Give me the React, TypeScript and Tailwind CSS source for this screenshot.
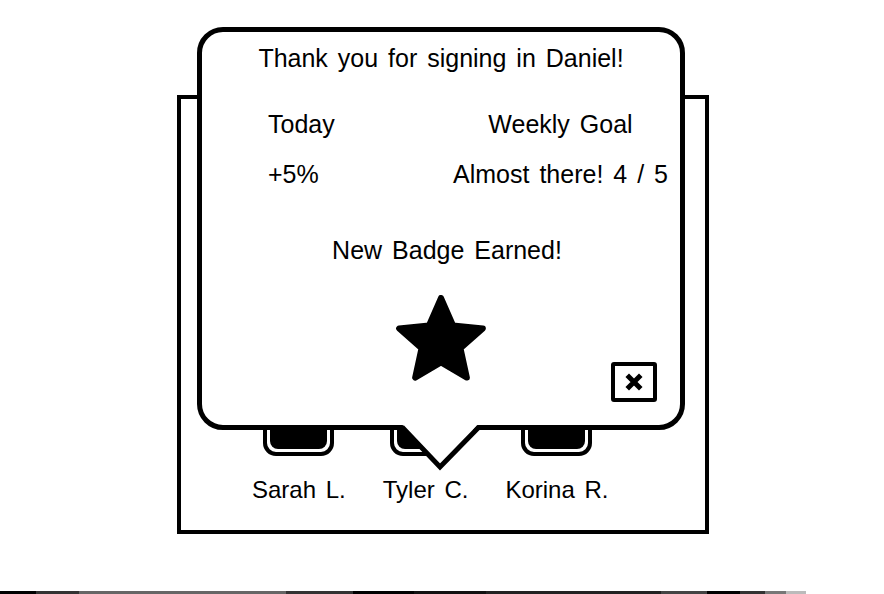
import type { ReactNode } from 'react'

const font = { fontFamily: '"Liberation Sans", Arial, sans-serif' }

function Avatar({ name }: { name: string }) {
  return (
    <div className="flex flex-col items-center">
      <div className="w-[71px] h-[71px] border-[4px] border-black rounded-[13px] p-[3px] bg-white">
        <div className="w-full h-full bg-black rounded-[8px]" />
      </div>
      <span className="mt-[19px] text-[24px] leading-[30px] text-black [word-spacing:3px] whitespace-nowrap">
        {name}
      </span>
    </div>
  )
}

function Line({ children, className = '' }: { children: ReactNode; className?: string }) {
  return (
    <div className={`text-[25px] leading-[30px] text-black [word-spacing:3px] whitespace-nowrap ${className}`}>
      {children}
    </div>
  )
}

function Star() {
  return (
    <svg width="94" height="88" viewBox="0 0 94 88">
      <polygon
        points="47,3 59.05,30.42 88.85,33.4 66.5,53.33 72.86,82.6 47,67.5 21.14,82.6 27.5,53.33 5.15,33.4 34.95,30.42"
        fill="black"
        stroke="black"
        strokeWidth="6"
        strokeLinejoin="round"
      />
    </svg>
  )
}

export default function App() {
  const people = ['Sarah L.', 'Tyler C.', 'Korina R.']

  return (
    <div className="relative w-[884px] h-[594px] bg-white overflow-hidden" style={font}>
      {/* background card with the team */}
      <div className="ml-[177px] mt-[95px] w-[532px] h-[439px] border-[4px] border-black bg-white flex flex-col justify-end pb-[25px] pl-[71px]">
        <div className="flex gap-[37px] items-end">
          {people.map((p) => (
            <Avatar key={p} name={p} />
          ))}
        </div>
      </div>

      {/* bottom rule */}
      <div className="mt-[57px] flex h-[3px] w-[806px]">
        <div className="w-[36px] bg-black" />
        <div className="w-[43px] bg-[#333]" />
        <div className="w-[207px] bg-[#666]" />
        <div className="w-[67px] bg-[#333]" />
        <div className="w-[61px] bg-black" />
        <div className="w-[72px] bg-[#111]" />
        <div className="w-[175px] bg-[#222]" />
        <div className="w-[46px] bg-[#444]" />
        <div className="w-[33px] bg-black" />
        <div className="w-[25px] bg-[#333]" />
        <div className="w-[21px] bg-[#777]" />
        <div className="w-[20px] bg-[#bbb]" />
      </div>

      {/* speech bubble popup */}
      <div className="absolute left-[197px] top-[27px] w-[488px] h-[403px] border-[5px] border-black rounded-[26px] bg-white flex flex-col pt-[11px]">
        <Line className="text-center">Thank you for signing in Daniel!</Line>

        <div className="mt-[36px] grid grid-cols-2 gap-y-[20px]">
          <Line className="pl-[66px]">Today</Line>
          <Line className="text-center">Weekly Goal</Line>
          <Line className="pl-[66px]">+5%</Line>
          <Line className="text-center">Almost there! 4 / 5</Line>
        </div>

        <Line className="mt-[46px] text-center pl-[12px]">New Badge Earned!</Line>

        <div className="mt-[30px] grid grid-cols-[1fr_auto_1fr]">
          <div />
          <div className="self-start">
            <Star />
          </div>
          <div className="flex justify-end items-end pr-[23px] h-[107px]">
            <button className="w-[46px] h-[40px] border-[4px] border-black rounded-[3px] bg-white flex items-center justify-center">
              <svg width="20" height="20" viewBox="0 0 20 20">
                <path d="M5 5 L15 15 M15 5 L5 15" stroke="black" strokeWidth="5" strokeLinecap="square" />
              </svg>
            </button>
          </div>
        </div>
      </div>

      {/* bubble tail */}
      <svg className="absolute left-[395px] top-[420px]" width="90" height="52" viewBox="0 0 90 52">
        <polygon points="3,0 87,0 45,46" fill="white" />
        <polyline points="7,7 45,47 84,7" fill="none" stroke="black" strokeWidth="5" strokeLinejoin="miter" />
      </svg>
    </div>
  )
}
